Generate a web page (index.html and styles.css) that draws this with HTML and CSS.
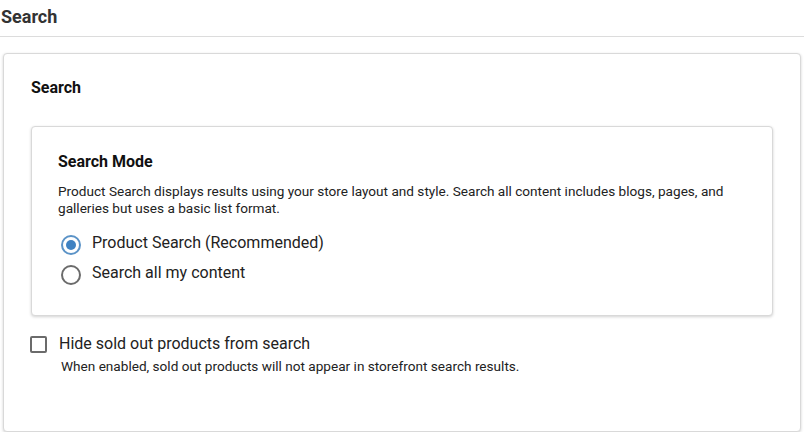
FILE: index.html
```html
<!DOCTYPE html>
<html lang="en">
<head>
  <meta charset="UTF-8" />
  <title>Search settings</title>
  <link rel="stylesheet" href="styles.css">
</head>
<body>
  <div class="page">
    <h1 class="page-title">Search</h1>

    <div class="card">
      <h2 class="card-title">Search</h2>

      <div class="card inner">
        <h3 class="section-title">Search Mode</h3>
        <p class="hint">Product Search displays results using your store layout and style. Search all content includes blogs, pages, and galleries but uses a basic list format.</p>

        <label class="radio-row">
          <span class="radio checked"></span>
          <span class="option">Product Search (Recommended)</span>
        </label>
        <label class="radio-row">
          <span class="radio"></span>
          <span class="option">Search all my content</span>
        </label>
      </div>

      <label class="check-row">
        <span class="checkbox"></span>
        <span class="option">Hide sold out products from search</span>
      </label>
      <p class="hint help">When enabled, sold out products will not appear in storefront search results.</p>
    </div>
  </div>
</body>
</html>
```

FILE: styles.css
```css
* { box-sizing: border-box; }
html, body {
  margin: 0;
  padding: 0;
  background: #fff;
  font-family: Roboto, "Liberation Sans", Arial, sans-serif;
  color: #222;
}
.page {
  width: 804px;
}
.page-title {
  margin: 0;
  padding: 7px 0 9px 1px;
  font-size: 18px;
  line-height: 20px;
  font-weight: 700;
  color: #333;
  border-bottom: 1px solid #dcdcdc;
}
.card {
  margin: 16px 3px 0 3px;
  padding: 24px 27px 56px 27px;
  border: 1px solid #d9d9d9;
  border-radius: 4px;
  background: #fff;
  box-shadow: 0 1px 3px rgba(0, 0, 0, 0.18);
}
.card-title {
  margin: 0;
  font-size: 16px;
  line-height: 20px;
  font-weight: 700;
  color: #111;
}
.card.inner {
  margin: 28px 0 0 0;
  padding: 25px 26px 30px 26px;
}
.section-title {
  margin: 0;
  font-size: 16px;
  line-height: 20px;
  font-weight: 700;
  color: #111;
}
.hint {
  margin: 11px 0 0 0;
  font-size: 13.6px;
  line-height: 17px;
  color: #222;
}
.radio-row {
  display: flex;
  align-items: flex-start;
  gap: 11px;
  margin-top: 16px;
  cursor: pointer;
}
.radio-row + .radio-row { margin-top: 8px; }
.option {
  font-size: 16px;
  line-height: 20px;
  color: #222;
}
.radio {
  width: 20px;
  height: 20px;
  margin: 2px 0 0 3px;
  border: 2px solid #6b6b6b;
  border-radius: 50%;
  display: flex;
  align-items: center;
  justify-content: center;
  flex: none;
}
.radio.checked {
  border-color: #5b93c7;
  border-width: 2.5px;
}
.radio.checked::after {
  content: "";
  width: 10px;
  height: 10px;
  border-radius: 50%;
  background: #3f82c2;
}
.check-row {
  display: flex;
  align-items: flex-start;
  gap: 12px;
  margin: 18px 0 0 -1px;
  cursor: pointer;
}
.checkbox {
  width: 17px;
  height: 17px;
  margin-top: 2px;
  border: 2px solid #6b6b6b;
  border-radius: 2px;
  flex: none;
}
.help {
  margin: 4px 0 0 30px;
}
```
